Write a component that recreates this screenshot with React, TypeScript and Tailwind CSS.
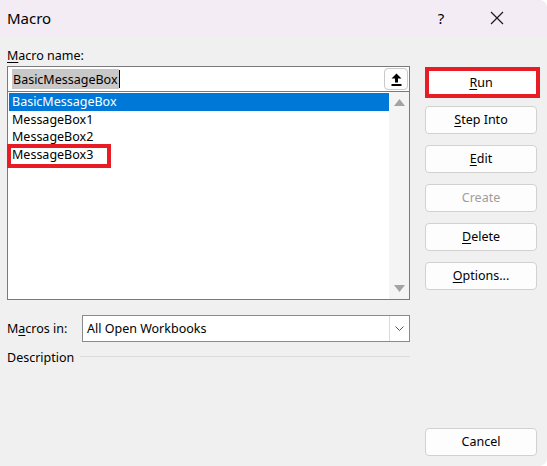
import React from "react";

const font = { fontFamily: '"Noto Sans", "Open Sans", Arial, sans-serif' };

function U({ children }: { children: React.ReactNode }) {
  return <span className="underline underline-offset-2 decoration-1">{children}</span>;
}

function Btn({ children, disabled }: { children: React.ReactNode; disabled?: boolean }) {
  return (
    <div
      className={
        "w-[112px] h-[28px] flex items-center justify-center pt-[1px] rounded-[4px] border border-[#d1d1d1] bg-[#fdfdfd] text-[12.5px] " +
        (disabled ? "text-[#9d9d9d]" : "text-black")
      }
    >
      {children}
    </div>
  );
}

export default function App() {
  const rows = ["BasicMessageBox", "MessageBox1", "MessageBox2", "MessageBox3"];
  return (
    <div
      className="w-[547px] h-[466px] bg-[#f0f0f0] flex flex-col overflow-hidden rounded-br-[8px] rounded-tr-[8px] text-black"
      style={font}
    >
      {/* Title bar */}
      <div className="h-[36px] shrink-0 bg-[#f4ecf4] flex items-center pl-[7px]">
        <span className="text-[15px] flex-1">Macro</span>
        <span className="text-[15px] w-[20px] text-center mr-[39px]">?</span>
        <svg width="14" height="14" viewBox="0 0 14 14" className="mr-[43px]">
          <path d="M1 1 L13 13 M13 1 L1 13" stroke="#1a1a1a" strokeWidth="1.2" fill="none" />
        </svg>
      </div>

      {/* Body */}
      <div className="flex flex-1 pl-[7px] pt-[10px]">
        {/* Left column */}
        <div className="w-[403px] flex flex-col">
          <div className="h-[20px] pt-[2px] text-[12.5px] leading-[16px]">
            <U>M</U>acro name:
          </div>
          {/* input */}
          <div className="h-[26px] border border-[#7a7a7a] bg-white flex items-center pl-[4px] pr-[1px]">
            <div className="flex-1 flex items-center">
              <span className="bg-[#c8c8c8] text-[12.5px] leading-[19px] px-[1px] pt-[1px]">BasicMessageBox</span>
              <span className="w-[1px] h-[18px] bg-black" />
            </div>
            <div className="w-[24px] h-[22px] rounded-[4px] border border-[#c9c9c9] bg-[#fdfdfd] flex items-center justify-center">
              <svg width="11" height="13" viewBox="0 0 11 13">
                <path d="M5.5 0.5 L10.5 5.5 L7 5.5 L7 9.5 L4 9.5 L4 5.5 L0.5 5.5 Z" fill="#000" />
                <rect x="0.5" y="11" width="10" height="2" fill="#000" />
              </svg>
            </div>
          </div>
          {/* list */}
          <div className="h-[208px] border-x border-b border-[#7a7a7a] bg-white flex">
            <div className="flex-1 pt-[1px] pl-[1px] flex flex-col">
              {rows.map((r, i) => (
                <div
                  key={r}
                  className={
                    "h-[17.5px] flex items-center pl-[3px] pt-[2px] text-[12.5px] relative " +
                    (i === 0 ? "bg-[#0078d7] text-white" : "")
                  }
                >
                  {r}
                  {i === 3 && (
                    <div className="absolute left-[-2px] top-[-2px] w-[104px] h-[24px] border-[4px] border-[#e81c24]" />
                  )}
                </div>
              ))}
            </div>
            <div className="w-[20px] bg-[#f4f4f4] flex flex-col items-center justify-between pt-[7px] pb-[7px]">
              <svg width="11" height="7" viewBox="0 0 11 7">
                <path d="M5.5 0 L11 7 L0 7 Z" fill="#a3a3a3" />
              </svg>
              <svg width="11" height="7" viewBox="0 0 11 7">
                <path d="M0 0 L11 0 L5.5 7 Z" fill="#a3a3a3" />
              </svg>
            </div>
          </div>

          {/* Macros in */}
          <div className="mt-[15px] flex items-center h-[27px]">
            <div className="w-[75px] text-[12.5px] pt-[2px]">
              M<U>a</U>cros in:
            </div>
            <div className="flex-1 h-[27px] border border-[#8a8a8a] bg-white flex items-center">
              <span className="flex-1 pl-[4px] pt-[2px] text-[12.5px]">All Open Workbooks</span>
              <div className="w-[20px] h-full border-l border-[#dadada] flex items-center justify-center">
                <svg width="9" height="5" viewBox="0 0 9 5">
                  <path d="M0.5 0.5 L4.5 4.5 L8.5 0.5" stroke="#555" strokeWidth="1" fill="none" />
                </svg>
              </div>
            </div>
          </div>

          {/* Description */}
          <div className="mt-[6px] h-[16px] flex items-center">
            <span className="text-[12.5px] leading-[16px] pt-[3px]">Description</span>
            <div className="flex-1 h-[1px] bg-[#dadada] ml-[6px]" />
          </div>
        </div>

        {/* Right column */}
        <div className="ml-[15px] pt-[21px] pb-[10px] flex flex-col">
          <div className="w-[115px] h-[31px] border-[4px] border-[#e81c24] bg-white flex items-center justify-center pt-[1px] text-[12.5px] pr-[3px]">
            <U>R</U>un
          </div>
          <div className="mt-[8px] flex flex-col gap-[11px]">
            <Btn>
              <U>S</U>tep Into
            </Btn>
            <Btn>
              <U>E</U>dit
            </Btn>
            <Btn disabled>Create</Btn>
            <Btn>
              <U>D</U>elete
            </Btn>
            <Btn>
              <U>O</U>ptions...
            </Btn>
          </div>
          <div className="mt-auto">
            <Btn>Cancel</Btn>
          </div>
        </div>
      </div>
    </div>
  );
}
